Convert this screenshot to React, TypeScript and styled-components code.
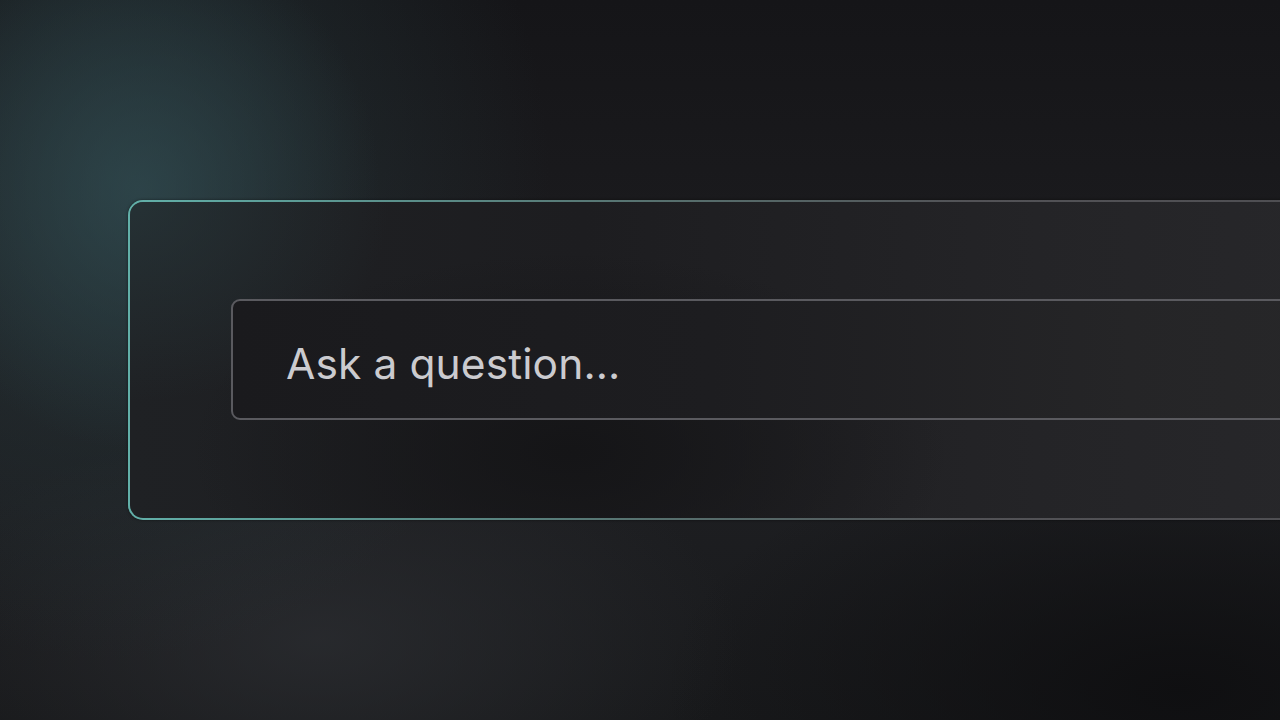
import React from "react";
import styled, { createGlobalStyle } from "styled-components";

const Global = createGlobalStyle`
  html, body {
    margin: 0;
    padding: 0;
    width: 100%;
    height: 100%;
    overflow: hidden;
    background: #1a1b1e;
  }
  #root { width: 100%; height: 100%; }
`;

const Stage = styled.main`
  width: 1280px;
  height: 720px;
  overflow: hidden;
  box-sizing: border-box;
  padding: 200px 0 0 128px;
  display: flex;
  align-items: flex-start;
  font-family: Inter, "Noto Sans", sans-serif;
  background:
    radial-gradient(ellipse 240px 260px at 140px 190px, rgba(50, 78, 84, 0.65), rgba(50, 78, 84, 0) 100%),
    radial-gradient(ellipse 440px 480px at 110px 180px, rgba(40, 58, 62, 0.7), rgba(40, 58, 62, 0) 100%),
    radial-gradient(ellipse 420px 220px at 320px 640px, rgba(44, 46, 50, 0.75), rgba(44, 46, 50, 0) 100%),
    radial-gradient(ellipse 520px 260px at 1180px 690px, rgba(14, 14, 16, 0.9), rgba(14, 14, 16, 0) 100%),
    linear-gradient(180deg, #151518 0%, #1b1b1e 35%, #1d1e21 70%, #18191b 100%);
`;

const Panel = styled.section`
  flex: 0 0 auto;
  width: 1300px;
  height: 320px;
  box-sizing: border-box;
  border: 2px solid transparent;
  border-radius: 15px;
  padding: 97px 0 0 101px;
  display: flex;
  align-items: flex-start;
  box-shadow: 0 0 3px rgba(0, 0, 0, 0.5);
  background:
    radial-gradient(ellipse 380px 200px at 440px 250px, rgba(20, 20, 22, 0.9), rgba(20, 20, 22, 0) 100%) padding-box,
    radial-gradient(ellipse 260px 200px at 0px 0px, rgba(40, 56, 60, 0.7), rgba(40, 56, 60, 0) 100%) padding-box,
    linear-gradient(90deg, #1f2124 0%, #1d1d20 35%, #242427 70%, #28282b 100%) padding-box,
    linear-gradient(90deg, #62b0a9 0%, #5c9d97 12%, #57716f 40%, #525256 65%, #4d4d51 100%) border-box;
`;

const Field = styled.div`
  flex: 0 0 auto;
  width: 1200px;
  height: 121px;
  box-sizing: border-box;
  border: 2px solid #5a5a5f;
  border-radius: 9px;
  display: flex;
  align-items: center;
  padding: 0 0 0 53px;
  background: linear-gradient(90deg, #1a1a1d 0%, #1d1d20 40%, #252527 75%, #28282a 100%);
`;

const Placeholder = styled.span`
  font-family: Inter, "Noto Sans", sans-serif;
  font-size: 42.5px;
  font-weight: 400;
  color: #cbcbcf;
  letter-spacing: 0.1px;
  line-height: 1;
  margin-top: 9px;
`;

export default function App() {
  return (
    <>
      <Global />
      <Stage>
        <Panel>
          <Field>
            <Placeholder>Ask a question...</Placeholder>
          </Field>
        </Panel>
      </Stage>
    </>
  );
}
